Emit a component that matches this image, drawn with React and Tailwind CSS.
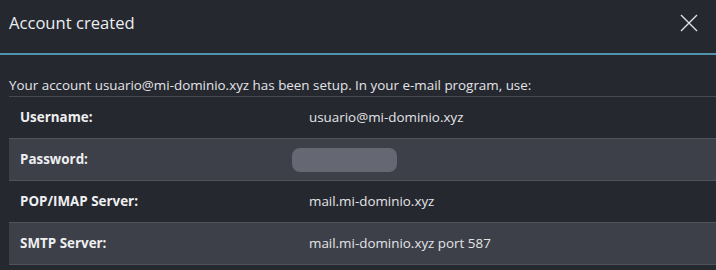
export default function App() {
  const rows = [
    { label: "Username:", value: "usuario@mi-dominio.xyz" },
    { label: "Password:", value: null },
    { label: "POP/IMAP Server:", value: "mail.mi-dominio.xyz" },
    { label: "SMTP Server:", value: "mail.mi-dominio.xyz port 587" },
  ];
  return (
    <div className="w-[716px] h-[270px] overflow-hidden bg-[#262830] text-[#e6e7ea]" style={{ fontFamily: '"Open Sans", sans-serif' }}>
      <div className="h-[55px] flex items-center justify-between pl-[9px] pr-[18px] border-b-2 border-[#4f93ad]">
        <div className="text-[16.6px] text-[#eceef0] -mt-[6px]">Account created</div>
        <svg width="18" height="18" viewBox="0 0 18 18" className="-mt-[7px]">
          <path d="M1 1 L17 17 M17 1 L1 17" stroke="#dfe1e4" strokeWidth="1.4" />
        </svg>
      </div>
      <div className="pl-[9px]">
        <div className="h-[42px] flex items-end pb-[1px] text-[13.4px] text-[#e3e4e7] border-b border-[#474a52]">
          Your account usuario@mi-dominio.xyz has been setup. In your e-mail program, use:
        </div>
        {rows.map((r, i) => (
          <div
            key={r.label}
            className={`h-[42px] flex items-center border-b border-[#50535c] text-[13.4px] ${i % 2 === 1 ? "bg-[#3d4049]" : "bg-[#262830]"}`}
          >
            <div className="w-[300px] pl-[11px] font-bold text-[#eeeff1]">{r.label}</div>
            {r.value ? (
              <div className="text-[#e3e4e7]">{r.value}</div>
            ) : (
              <div className="-ml-[17px] w-[105px] h-[24px] rounded-[8px] bg-[#656873]" />
            )}
          </div>
        ))}
      </div>
    </div>
  );
}
